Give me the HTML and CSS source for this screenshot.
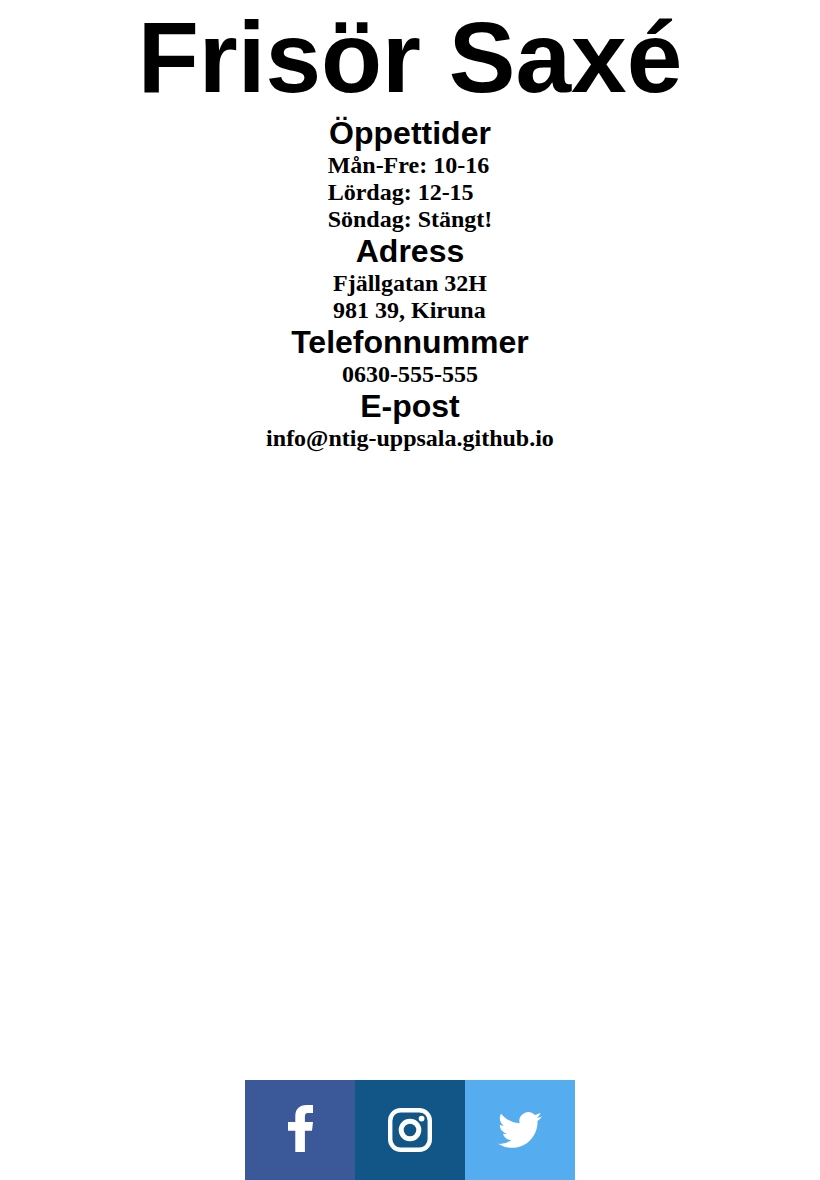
FILE: index.html
```html
<!DOCTYPE html>
<html lang="sv">
<head>
<meta charset="utf-8">
<title>Frisör Saxé</title>
<link rel="stylesheet" href="styles.css">
</head>
<body>
<main class="info">
  <h1 class="title">Frisör Saxé</h1>
  <h2 class="heading">Öppettider</h2>
  <p class="details">Mån-Fre: 10-16<br>Lördag: 12-15<br>Söndag: Stängt!</p>
  <h2 class="heading">Adress</h2>
  <p class="details">Fjällgatan 32H<br>981 39, Kiruna</p>
  <h2 class="heading">Telefonnummer</h2>
  <p class="details">0630-555-555</p>
  <h2 class="heading">E-post</h2>
  <p class="details">info@ntig-uppsala.github.io</p>
</main>
<footer class="social">
  <a class="social-link facebook" aria-label="Facebook">
    <svg class="icon" viewBox="0 0 110 100"><path d="M50.300 72V50.700H43V42H50.300V36C50.300 29 54.500 25 61.500 25H68V33H63.500C60.500 33 59.900 34.500 59.900 37V42H68L67 50.700H59.900V72Z"/></svg>
  </a>
  <a class="social-link instagram" aria-label="Instagram">
    <svg class="icon" viewBox="0 0 110 100"><rect class="line" x="35.200" y="30.200" width="39.600" height="39.600" rx="10.500"/><circle class="line lens" cx="55" cy="50" r="8.800"/><circle cx="66.600" cy="38.600" r="2.900"/></svg>
  </a>
  <a class="social-link twitter" aria-label="Twitter">
    <svg class="icon" viewBox="0 0 110 100"><path transform="translate(33 28) scale(1.833)" d="M23.953 4.570a10 10 0 0 1-2.825.775 4.958 4.958 0 0 0 2.163-2.723c-.951.555-2.005.959-3.127 1.184a4.920 4.920 0 0 0-8.384 4.482C7.690 8.095 4.067 6.130 1.640 3.162a4.822 4.822 0 0 0-.666 2.475c0 1.710.870 3.213 2.188 4.096a4.904 4.904 0 0 1-2.228-.616v.060a4.923 4.923 0 0 0 3.946 4.827 4.996 4.996 0 0 1-2.212.085 4.936 4.936 0 0 0 4.604 3.417 9.867 9.867 0 0 1-6.102 2.105c-.390 0-.779-.023-1.170-.067a13.995 13.995 0 0 0 7.557 2.209c9.053 0 13.998-7.496 13.998-13.985 0-.210 0-.420-.015-.630A9.935 9.935 0 0 0 24 4.590Z"/></svg>
  </a>
</footer>
</body>
</html>
```
FILE: styles.css
```css
* {
  box-sizing: border-box;
}

body {
  min-height: 100vh;
  margin: 0;
  display: flex;
  flex-direction: column;
  align-items: center;
  background: #fff;
  color: #000;
}

.info {
  display: flex;
  flex-direction: column;
  align-items: center;
}

.title,
.heading {
  margin: 0;
  font-family: Arial, "Liberation Sans", sans-serif;
  font-weight: bold;
}

.title {
  font-size: 100px;
  line-height: 115px;
}

.heading {
  font-size: 32px;
  line-height: 37px;
}

.details {
  margin: 0;
  font: bold 24px/27px "Times New Roman", "Liberation Serif", serif;
}

.social {
  display: flex;
  margin-top: auto;
}

.social-link {
  width: 110px;
  height: 100px;
}

.facebook {
  background: #3b5998;
}

.instagram {
  background: #125688;
}

.twitter {
  background: #55acee;
}

.icon {
  display: block;
  width: 110px;
  height: 100px;
  fill: #fff;
}

.line {
  fill: none;
  stroke: #fff;
  stroke-width: 4.4;
}

.lens {
  stroke-width: 5;
}
```
